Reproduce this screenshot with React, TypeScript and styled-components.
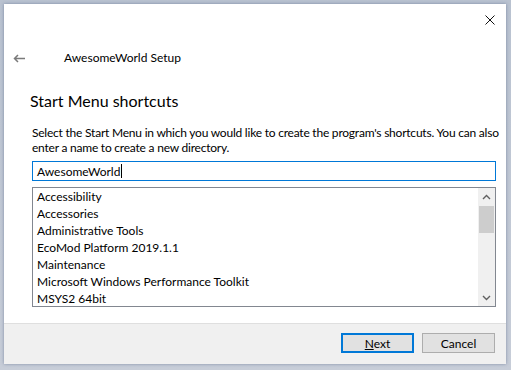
import React from 'react'
import styled, { createGlobalStyle } from 'styled-components'

const GlobalStyle = createGlobalStyle`
  html, body {
    margin: 0;
    padding: 0;
    background: #c3cad6;
  }
  body {
    font-family: Lato, 'Noto Sans', sans-serif;
    font-size: 12px;
    color: #000;
  }
`

const Frame = styled.div`
  padding: 4px 5px 6px 4px;
  width: 511px;
  height: 370px;
  box-sizing: border-box;
  background: linear-gradient(#b9c2d0, #c7cdd8);
`

const Window = styled.div`
  width: 502px;
  height: 360px;
  background: #fff;
  display: flex;
  flex-direction: column;
  box-shadow: 0 0 3px rgba(60, 80, 120, 0.5);
`

const TopRow = styled.div`
  height: 32px;
  display: flex;
  justify-content: flex-end;
  align-items: flex-start;
  padding: 11px 11px 0 0;
  box-sizing: border-box;
`

const CloseButton = styled.div`
  width: 10px;
  height: 10px;
  display: flex;
`

const HeaderRow = styled.div`
  height: 44px;
  display: flex;
  align-items: center;
  padding-left: 9px;
`

const BackArrow = styled.div`
  width: 12px;
  height: 9px;
  display: flex;
  margin-right: 39px;
`

const Title = styled.div`
  font-size: 12px;
  line-height: 16px;
`

const Content = styled.div`
  padding: 0 10px 0 28px;
  display: flex;
  flex-direction: column;
`

const Heading = styled.h1`
  margin: 11px 0 0 -2px;
  font-size: 16px;
  line-height: 20px;
  font-weight: normal;
`

const Description = styled.p`
  margin: 14px 0 0 0;
  line-height: 15px;
  letter-spacing: -0.22px;
  white-space: nowrap;
`

const TextBox = styled.div`
  margin-top: 6px;
  height: 20px;
  border: 1px solid #0078d7;
  box-sizing: border-box;
  display: flex;
  align-items: center;
  padding-left: 4px;
`

const Caret = styled.span`
  display: inline-block;
  width: 1px;
  height: 14px;
  background: #000;
  margin-left: 1px;
`

const ListBox = styled.div`
  margin-top: 6px;
  height: 120px;
  border: 1px solid #828790;
  box-sizing: border-box;
  display: flex;
`

const Items = styled.div`
  flex: 1;
  padding: 0 0 0 4px;
`

const Item = styled.div`
  height: 17px;
  line-height: 17px;
  white-space: nowrap;
`

const ScrollBar = styled.div`
  width: 17px;
  background: #f0f0f0;
  display: flex;
  flex-direction: column;
`

const ScrollArrow = styled.div`
  height: 17px;
  display: flex;
  align-items: center;
  justify-content: center;
`

const Track = styled.div`
  flex: 1;
  padding: 1px 1px 0 1px;
`

const Thumb = styled.div`
  height: 27px;
  background: #cdcdcd;
`

const Footer = styled.div`
  margin-top: auto;
  height: 41px;
  box-sizing: border-box;
  border-top: 1px solid #dfdfdf;
  background: #f0f0f0;
  display: flex;
  justify-content: flex-end;
  align-items: flex-start;
  gap: 8px;
  padding: 9px 11px 0 0;
`

const Button = styled.div<{ $default?: boolean }>`
  width: 73px;
  height: 20px;
  box-sizing: border-box;
  background: #e1e1e1;
  border: ${p => (p.$default ? '2px solid #0078d7' : '1px solid #adadad')};
  display: flex;
  align-items: center;
  justify-content: center;
  font-size: 12px;
`

const Chevron: React.FC<{ up?: boolean }> = ({ up }) => (
  <svg width="9" height="6" viewBox="0 0 9 6">
    <path
      d={up ? 'M1 5 L4.5 1.5 L8 5' : 'M1 1 L4.5 4.5 L8 1'}
      fill="none"
      stroke="#606060"
      strokeWidth="1.4"
    />
  </svg>
)

const folders = [
  'Accessibility',
  'Accessories',
  'Administrative Tools',
  'EcoMod Platform 2019.1.1',
  'Maintenance',
  'Microsoft Windows Performance Toolkit',
  'MSYS2 64bit',
]

const App: React.FC = () => {
  return (
    <>
      <GlobalStyle />
      <Frame>
        <Window>
          <TopRow>
            <CloseButton>
              <svg width="10" height="10" viewBox="0 0 10 10">
                <path d="M0.5 0.5 L9.5 9.5 M9.5 0.5 L0.5 9.5" stroke="#111" strokeWidth="1" />
              </svg>
            </CloseButton>
          </TopRow>
          <HeaderRow>
            <BackArrow>
              <svg width="12" height="9" viewBox="0 0 12 9">
                <path d="M12 4.5 H1.5 M5 1 L1.5 4.5 L5 8" fill="none" stroke="#7a7a7a" strokeWidth="1.5" />
              </svg>
            </BackArrow>
            <Title>AwesomeWorld Setup</Title>
          </HeaderRow>
          <Content>
            <Heading>Start Menu shortcuts</Heading>
            <Description>
              Select the Start Menu in which you would like to create the program's shortcuts. You can also
              <br />
              enter a name to create a new directory.
            </Description>
            <TextBox>
              AwesomeWorld
              <Caret />
            </TextBox>
            <ListBox>
              <Items>
                {folders.map(f => (
                  <Item key={f}>{f}</Item>
                ))}
              </Items>
              <ScrollBar>
                <ScrollArrow>
                  <Chevron up />
                </ScrollArrow>
                <Track>
                  <Thumb />
                </Track>
                <ScrollArrow>
                  <Chevron />
                </ScrollArrow>
              </ScrollBar>
            </ListBox>
          </Content>
          <Footer>
            <Button $default>
              <span>
                <u>N</u>ext
              </span>
            </Button>
            <Button>Cancel</Button>
          </Footer>
        </Window>
      </Frame>
    </>
  )
}

export default App
